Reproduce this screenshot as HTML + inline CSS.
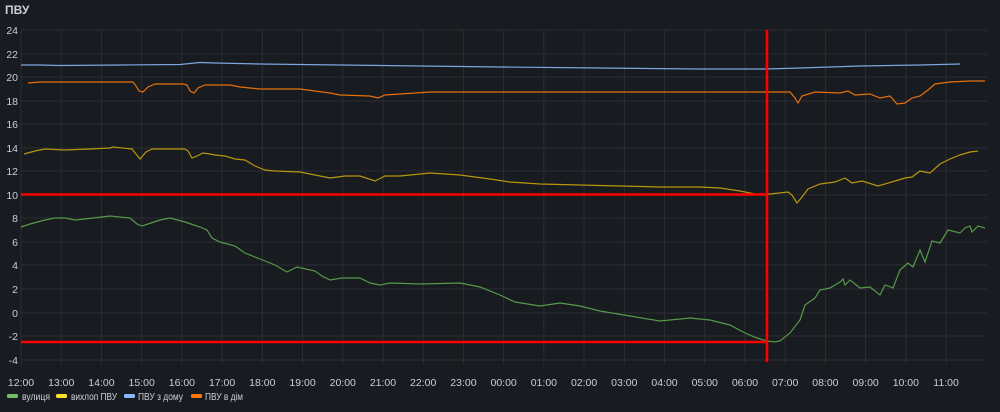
<!DOCTYPE html>
<html><head><meta charset="utf-8"><style>
body{margin:0;background:#181b1f;width:1000px;height:407px;overflow:hidden;font-family:"Liberation Sans",sans-serif;}
svg text{font-family:"Liberation Sans",sans-serif;}
</style></head><body>
<svg width="1000" height="407" xmlns="http://www.w3.org/2000/svg">
<rect width="1000" height="407" fill="#181b1f"/>
<text x="5" y="14" fill="#ccccdc" font-size="12" font-weight="bold">ПВУ</text>
<g stroke="#2b2e33" stroke-width="1">
<line x1="21" y1="30" x2="987" y2="30"/><line x1="21" y1="54" x2="987" y2="54"/><line x1="21" y1="77" x2="987" y2="77"/><line x1="21" y1="101" x2="987" y2="101"/><line x1="21" y1="124" x2="987" y2="124"/><line x1="21" y1="148" x2="987" y2="148"/><line x1="21" y1="171" x2="987" y2="171"/><line x1="21" y1="195" x2="987" y2="195"/><line x1="21" y1="218" x2="987" y2="218"/><line x1="21" y1="242" x2="987" y2="242"/><line x1="21" y1="265" x2="987" y2="265"/><line x1="21" y1="289" x2="987" y2="289"/><line x1="21" y1="313" x2="987" y2="313"/><line x1="21" y1="336" x2="987" y2="336"/><line x1="21" y1="360" x2="987" y2="360"/>
</g>
<g stroke="#2b2e33" stroke-width="1" id="vg"></g>
<g fill="#ccccdc" font-size="10.5" text-anchor="end">
<text x="18" y="34">24</text><text x="18" y="58">22</text><text x="18" y="81">20</text><text x="18" y="105">18</text><text x="18" y="128">16</text><text x="18" y="152">14</text><text x="18" y="175">12</text><text x="18" y="199">10</text><text x="18" y="222">8</text><text x="18" y="246">6</text><text x="18" y="269">4</text><text x="18" y="293">2</text><text x="18" y="317">0</text><text x="18" y="340">-2</text><text x="18" y="364">-4</text>
</g>
<g id="xl" fill="#ccccdc" font-size="10.5" text-anchor="middle"></g>
<polyline fill="none" stroke="#7ea6e0" stroke-width="1.2" points="21,65 40,65 60,65.5 120,65 180,64.5 200,62.5 215,63 260,64 340,65 420,66 500,67 600,68 700,69 766,69 800,68 860,66 920,65 960,64"/>
<polyline fill="none" stroke="#e6700c" stroke-width="1.2" points="28,83 40,82 100,82 133,82 136,86 139,91 143,92 148,87 155,84 183,84 187,85 190,91 194,93 198,88 205,85 230,85 240,87 260,89 300,89 330,93 340,95 370,96 378,98 385,95 400,94 430,92 500,92 600,92 700,92 766,92 790,92 795,98 798,103 802,96 815,92 840,93 848,91 855,95 870,94 880,98 890,96 897,104 905,103 912,98 920,96 928,90 935,84 950,82 970,81 985,81"/>
<polyline fill="none" stroke="#b8960f" stroke-width="1.2" points="24,154 35,151 45,149 65,150 90,149 110,148 113,147 132,149 136,154 140,159 146,152 152,149 185,149 188,151 192,158 197,156 203,153 210,154 215,155 225,156 235,159 245,160 255,166 265,170 275,171 300,172 310,174 330,178 345,176 360,176 375,181 385,176 400,176 430,173 460,175 490,179 510,182 540,184 580,185 620,186 660,187 700,187 720,188 740,191 755,194 770,194 788,192 792,195 797,203 802,197 808,189 820,184 835,182 845,178 852,183 862,181 878,186 895,181 905,178 912,177 920,171 930,173 940,164 950,159 960,155 970,152 978,151"/>
<polyline fill="none" stroke="#56994b" stroke-width="1.2" points="21,227 30,224 45,220 55,218 65,218 75,220 85,219 110,216 130,218 137,224 142,226 160,220 170,218 185,222 200,227 207,230 212,238 220,242 235,246 245,253 260,259 275,265 287,272 297,267 315,271 322,276 330,280 342,278 360,278 370,283 380,285 390,283 420,284 460,283 480,287 500,295 515,302 540,306 560,303 580,306 600,311 630,316 660,321 690,318 710,320 730,325 745,333 757,338 767,341 775,342 780,341 790,333 800,320 805,305 815,298 820,290 830,288 840,282 843,279 845,285 850,280 860,288 870,287 880,295 885,285 893,288 900,270 908,263 913,267 920,250 925,262 932,241 940,243 948,230 960,233 965,228 970,226 972,232 978,226 985,228"/>
<line x1="21" y1="194.5" x2="767" y2="194.5" stroke="#ff0000" stroke-width="2.5"/>
<line x1="21" y1="342" x2="767" y2="342" stroke="#ff0000" stroke-width="2.5"/>
<line x1="767" y1="30" x2="767" y2="362" stroke="#ff0000" stroke-width="2.5"/>
<g font-size="10" fill="#ccccdc">
<rect x="7" y="394" width="11" height="4" rx="1.5" fill="#73bf69"/><text x="22" y="400" textLength="28" lengthAdjust="spacingAndGlyphs">вулиця</text>
<rect x="56" y="394" width="11" height="4" rx="1.5" fill="#fade2a"/><text x="71" y="400" textLength="46" lengthAdjust="spacingAndGlyphs">вихлоп ПВУ</text>
<rect x="124" y="394" width="11" height="4" rx="1.5" fill="#8ab8ff"/><text x="138" y="400" textLength="45" lengthAdjust="spacingAndGlyphs">ПВУ з дому</text>
<rect x="191" y="394" width="11" height="4" rx="1.5" fill="#ff780a"/><text x="205" y="400" textLength="38" lengthAdjust="spacingAndGlyphs">ПВУ в дім</text>
</g>
</svg>
<script>
var labs=["12:00","13:00","14:00","15:00","16:00","17:00","18:00","19:00","20:00","21:00","22:00","23:00","00:00","01:00","02:00","03:00","04:00","05:00","06:00","07:00","08:00","09:00","10:00","11:00"];
var ns="http://www.w3.org/2000/svg",vg=document.getElementById("vg"),xl=document.getElementById("xl");
labs.forEach(function(l,i){var x=21+i*40.22;var ln=document.createElementNS(ns,"line");ln.setAttribute("x1",x);ln.setAttribute("x2",x);ln.setAttribute("y1",30);ln.setAttribute("y2",365);vg.appendChild(ln);
var t=document.createElementNS(ns,"text");t.setAttribute("x",x);t.setAttribute("y",386);t.textContent=l;xl.appendChild(t);});
</script>
</body></html>
